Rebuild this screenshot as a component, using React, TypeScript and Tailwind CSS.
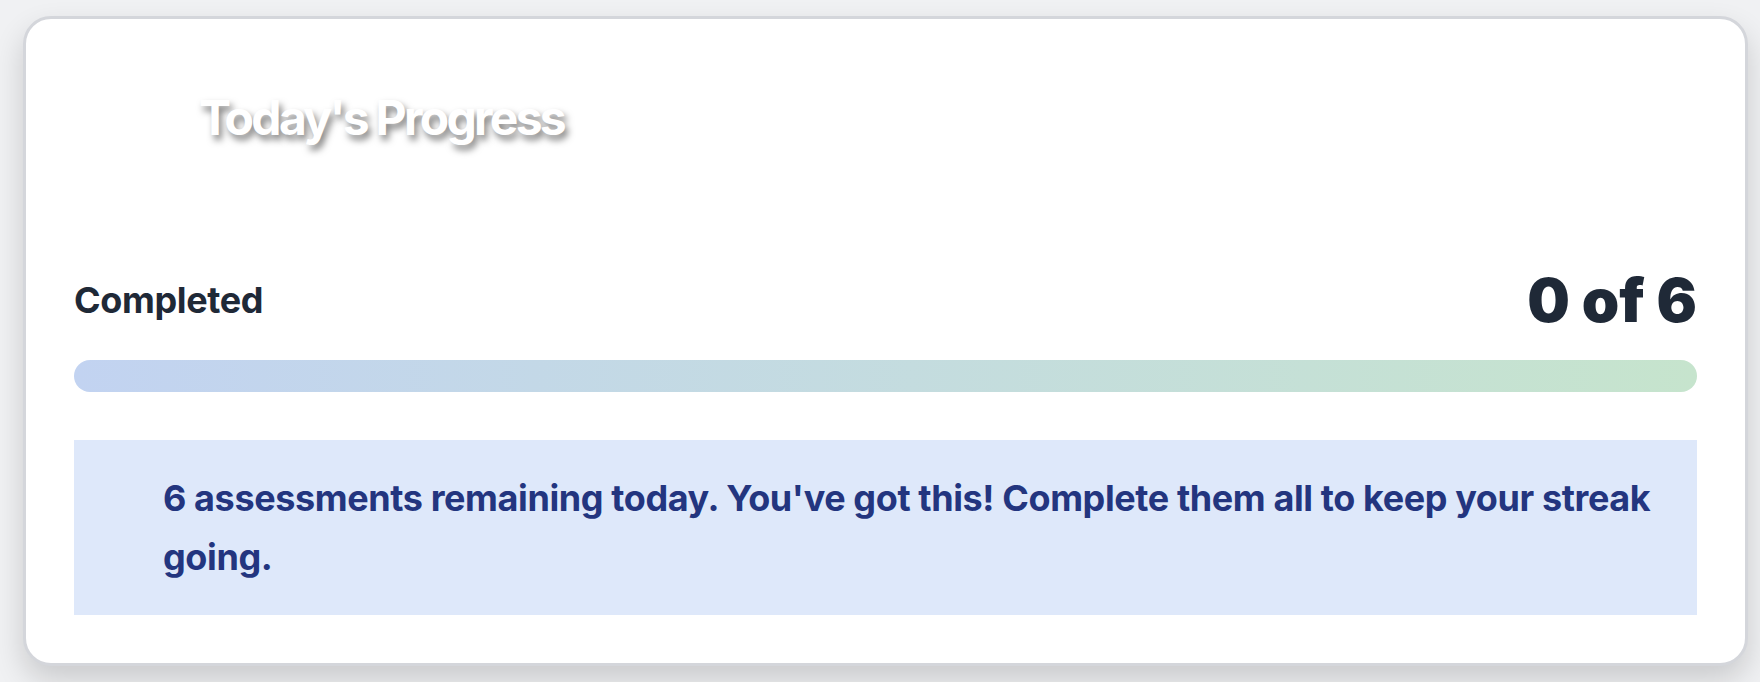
export default function App() {
  return (
    <div className="min-h-screen bg-[#f0f1f3] pt-[16px] pl-[23px] font-['Inter',sans-serif]">
      <div className="w-[1725px] rounded-[28px] border-[3px] border-[#d4d6db] bg-white px-12 pb-12 pt-[75px] shadow-[0_14px_30px_rgba(0,0,0,0.16)]">
        {/* header */}
        <h2 className="pl-[125px] text-[48px] font-bold leading-none tracking-[-0.056em] text-white [text-shadow:3px_5px_7px_rgba(0,0,0,0.5)]">
          Today's Progress
        </h2>

        <div className="mt-[128px] flex h-[60px] items-center justify-between">
          <span className="text-[36px] font-bold leading-none tracking-[-0.01em] text-[#1f2937]">
            Completed
          </span>
          <span className="text-[60px] font-black leading-none text-[#1f2937]">
            0 of 6
          </span>
        </div>

        <div className="mt-[30px] h-8 w-full rounded-full bg-gradient-to-r from-[#c2d3f1] to-[#c6e4cd]" />

        <div className="mt-12 bg-[#dee8fa] py-[29px] pl-[89px] pr-8">
          <p className="text-[36px] font-bold leading-[1.625] tracking-[-0.011em] text-[#23357f]">
            6 assessments remaining today. You've got this! Complete them all to keep your streak going.
          </p>
        </div>
      </div>
    </div>
  );
}
